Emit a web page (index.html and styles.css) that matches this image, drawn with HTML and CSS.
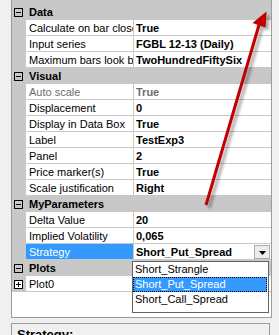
FILE: index.html
```html
<!DOCTYPE html>
<html lang="en">
<head>
    <meta charset="UTF-8">
    <title>Strategy Properties</title>
    <link rel="stylesheet" href="styles.css">
</head>
<body>

    <div class="grid">
        <div class="grid-top"></div>

        <div class="cat">
            <svg class="toggle" width="9" height="9"><rect x="0.5" y="0.5" width="8" height="8" fill="none" stroke="#000"/><path d="M2 4.5h5" stroke="#000"/></svg>
            <span>Data</span>
        </div>
        <div class="row"><div class="gutter"></div><div class="name">Calculate on bar close</div><div class="value">True</div></div>
        <div class="row"><div class="gutter"></div><div class="name">Input series</div><div class="value">FGBL 12-13 (Daily)</div></div>
        <div class="row"><div class="gutter"></div><div class="name">Maximum bars look back</div><div class="value">TwoHundredFiftySix</div></div>

        <div class="cat">
            <svg class="toggle" width="9" height="9"><rect x="0.5" y="0.5" width="8" height="8" fill="none" stroke="#000"/><path d="M2 4.5h5" stroke="#000"/></svg>
            <span>Visual</span>
        </div>
        <div class="row disabled"><div class="gutter"></div><div class="name">Auto scale</div><div class="value">True</div></div>
        <div class="row"><div class="gutter"></div><div class="name">Displacement</div><div class="value">0</div></div>
        <div class="row"><div class="gutter"></div><div class="name">Display in Data Box</div><div class="value">True</div></div>
        <div class="row"><div class="gutter"></div><div class="name">Label</div><div class="value">TestExp3</div></div>
        <div class="row"><div class="gutter"></div><div class="name">Panel</div><div class="value">2</div></div>
        <div class="row"><div class="gutter"></div><div class="name">Price marker(s)</div><div class="value">True</div></div>
        <div class="row"><div class="gutter"></div><div class="name">Scale justification</div><div class="value">Right</div></div>

        <div class="cat">
            <svg class="toggle" width="9" height="9"><rect x="0.5" y="0.5" width="8" height="8" fill="none" stroke="#000"/><path d="M2 4.5h5" stroke="#000"/></svg>
            <span>MyParameters</span>
        </div>
        <div class="row"><div class="gutter"></div><div class="name">Delta Value</div><div class="value">20</div></div>
        <div class="row"><div class="gutter"></div><div class="name">Implied Volatility</div><div class="value">0,065</div></div>
        <div class="row combo-row">
            <div class="gutter"></div>
            <div class="name selected">Strategy</div>
            <div class="value combo">
                <span>Short_Put_Spread</span>
                <span class="combo-btn"><svg width="7" height="4"><path d="M0 0h7L3.5 4z" fill="#000"/></svg></span>
            </div>
            <ul class="dropdown">
                <li>Short_Strangle</li>
                <li class="picked">Short_Put_Spread</li>
                <li>Short_Call_Spread</li>
            </ul>
        </div>

        <div class="cat">
            <svg class="toggle" width="9" height="9"><rect x="0.5" y="0.5" width="8" height="8" fill="none" stroke="#000"/><path d="M2 4.5h5" stroke="#000"/></svg>
            <span>Plots</span>
        </div>
        <div class="row">
            <div class="gutter"><svg class="expand" width="9" height="9"><rect x="0.5" y="0.5" width="8" height="8" fill="#fff" stroke="#000"/><path d="M2 4.5h5M4.5 2v5" stroke="#000"/></svg></div>
            <div class="name">Plot0</div>
            <div class="value"></div>
        </div>

        <div class="grid-empty"></div>
    </div>

    <div class="info">
        <h3>Strategy:</h3>
    </div>

    <!-- red pointer drawn over the grid -->
    <svg class="arrow" width="279" height="335" viewBox="0 0 279 335">
        <defs>
            <filter id="shadow" x="-50%" y="-10%" width="200%" height="120%">
                <feDropShadow dx="3" dy="3" stdDeviation="1.5" flood-color="#000" flood-opacity="0.35"/>
            </filter>
        </defs>
        <g filter="url(#shadow)">
            <line x1="206" y1="205" x2="259" y2="25" stroke="#c00000" stroke-width="3"/>
            <polygon points="266.5,11.5 252.5,23 265.5,27.5" fill="#c00000"/>
        </g>
    </svg>

</body>
</html>
```

FILE: styles.css
```css
html, body {
    margin: 0;
    overflow: hidden;
}
body {
    font-family: "Liberation Sans", Arial, sans-serif;
    font-size: 11px;
    color: #000;
    background-color: #f0f0f0;
    width: 279px;
    height: 335px;
    position: relative;
}
.grid {
    margin-left: 11px;
    width: 259px;
    border: 1px solid #9c9c9c;
    border-top: none;
    background-color: #fff;
}
.grid-top {
    height: 4px;
    background-color: #c8c8c8;
}
.grid-empty {
    height: 25px;
}
.cat {
    display: flex;
    align-items: center;
    height: 16px;
    line-height: 16px;
    background-color: #c8c8c8;
    font-weight: bold;
}
.toggle {
    margin: 1px 6px 0 2px;
}
.row {
    display: flex;
    height: 16px;
}
.gutter {
    width: 14px;
    flex: none;
    background-color: #c8c8c8;
}
.expand {
    display: block;
    margin: 4px 0 0 2px;
}
.name {
    width: 104px;
    flex: none;
    padding: 1px 0 0 3px;
    line-height: 14px;
    border-right: 1px solid #c8c8c8;
    border-bottom: 1px solid #c8c8c8;
    white-space: nowrap;
    overflow: hidden;
}
.value {
    flex: 1;
    min-width: 0;
    padding: 1px 0 0 2px;
    line-height: 14px;
    border-bottom: 1px solid #c8c8c8;
    font-weight: bold;
    white-space: nowrap;
    overflow: hidden;
}
.disabled .name,
.disabled .value {
    color: #6d6d6d;
}
.name.selected {
    background-color: #3399ff;
    color: #fff;
}
.combo-row {
    position: relative;
}
.combo {
    display: flex;
    justify-content: space-between;
    align-items: flex-start;
}
.combo-btn {
    width: 16px;
    height: 14px;
    box-sizing: border-box;
    margin: 0 1px 0 0;
    border: 1px solid #acacac;
    background-color: #ececec;
    display: flex;
    align-items: center;
    justify-content: center;
}
.combo-btn svg {
    display: block;
    margin-top: 1px;
}
.dropdown {
    position: absolute;
    left: 120px;
    top: 17px;
    width: 137px;
    height: 52px;
    box-sizing: border-box;
    margin: 0;
    padding: 0;
    list-style: none;
    border: 1px solid #646464;
    background-color: #fff;
}
.dropdown li {
    height: 15px;
    line-height: 15px;
    padding-left: 2px;
    white-space: nowrap;
}
.dropdown li.picked {
    background-color: #3399ff;
    color: #fff;
    outline: 1px dotted #000;
    outline-offset: -1px;
    margin-right: 1px;
}
.info {
    margin: 5px 0 0 11px;
    width: 259px;
    height: 30px;
    box-sizing: border-box;
    border: 1px solid #9c9c9c;
    padding: 3px 0 0 5px;
}
.info h3 {
    margin: 0;
    font-size: 13px;
    line-height: 15px;
}
.arrow {
    position: absolute;
    top: 0;
    left: 0;
    pointer-events: none;
}
```
